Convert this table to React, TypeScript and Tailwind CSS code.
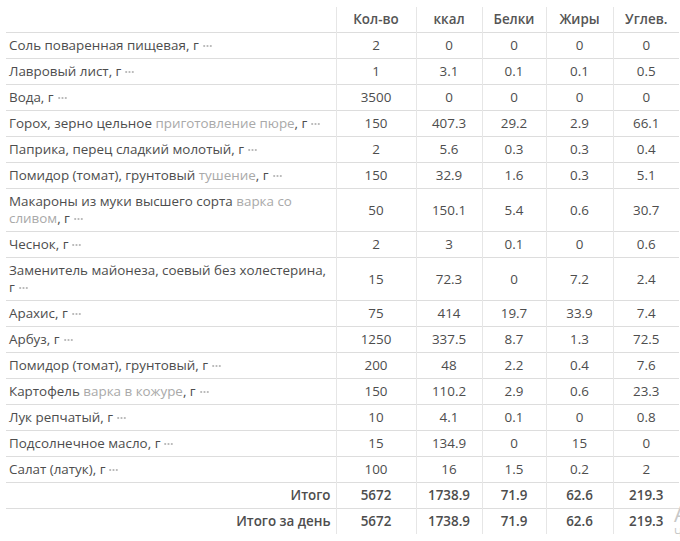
import React from "react";

type Row = {
  name: string;
  prep?: string;
  qty: string;
  kcal: string;
  protein: string;
  fat: string;
  carbs: string;
};

const ROWS: Row[] = [
  { name: "Соль поваренная пищевая", qty: "2", kcal: "0", protein: "0", fat: "0", carbs: "0" },
  { name: "Лавровый лист", qty: "1", kcal: "3.1", protein: "0.1", fat: "0.1", carbs: "0.5" },
  { name: "Вода", qty: "3500", kcal: "0", protein: "0", fat: "0", carbs: "0" },
  { name: "Горох, зерно цельное", prep: "приготовление пюре", qty: "150", kcal: "407.3", protein: "29.2", fat: "2.9", carbs: "66.1" },
  { name: "Паприка, перец сладкий молотый", qty: "2", kcal: "5.6", protein: "0.3", fat: "0.3", carbs: "0.4" },
  { name: "Помидор (томат), грунтовый", prep: "тушение", qty: "150", kcal: "32.9", protein: "1.6", fat: "0.3", carbs: "5.1" },
  { name: "Макароны из муки высшего сорта", prep: "варка со сливом", qty: "50", kcal: "150.1", protein: "5.4", fat: "0.6", carbs: "30.7" },
  { name: "Чеснок", qty: "2", kcal: "3", protein: "0.1", fat: "0", carbs: "0.6" },
  { name: "Заменитель майонеза, соевый без холестерина", qty: "15", kcal: "72.3", protein: "0", fat: "7.2", carbs: "2.4" },
  { name: "Арахис", qty: "75", kcal: "414", protein: "19.7", fat: "33.9", carbs: "7.4" },
  { name: "Арбуз", qty: "1250", kcal: "337.5", protein: "8.7", fat: "1.3", carbs: "72.5" },
  { name: "Помидор (томат), грунтовый", qty: "200", kcal: "48", protein: "2.2", fat: "0.4", carbs: "7.6" },
  { name: "Картофель", prep: "варка в кожуре", qty: "150", kcal: "110.2", protein: "2.9", fat: "0.6", carbs: "23.3" },
  { name: "Лук репчатый", qty: "10", kcal: "4.1", protein: "0.1", fat: "0", carbs: "0.8" },
  { name: "Подсолнечное масло", qty: "15", kcal: "134.9", protein: "0", fat: "15", carbs: "0" },
  { name: "Салат (латук)", qty: "100", kcal: "16", protein: "1.5", fat: "0.2", carbs: "2" },
];

const TOTALS = [
  { label: "Итого", values: ["5672", "1738.9", "71.9", "62.6", "219.3"] },
  { label: "Итого за день", values: ["5672", "1738.9", "71.9", "62.6", "219.3"] },
];

function MoreDots() {
  return (
    <svg width="9" height="4" viewBox="0 0 9 4" className="inline-block ml-[4px] align-middle">
      <circle cx="1.2" cy="2" r="1.1" fill="#b5b5b5" />
      <circle cx="4.5" cy="2" r="1.1" fill="#b5b5b5" />
      <circle cx="7.8" cy="2" r="1.1" fill="#b5b5b5" />
    </svg>
  );
}

const num = "border-l border-[#e6e6e6] text-center px-1 py-[4px]";

export default function App() {
  return (
    <div
      className="relative w-[680px] h-[541px] overflow-hidden bg-white text-[13.4px] leading-[17px] text-[#4d4d4d]"
      style={{ fontFamily: '"Open Sans", "Noto Sans", sans-serif' }}
    >
      <div className="pt-[7px] pl-[6px]">
        <table className="table-fixed border-collapse w-[673px]">
          <colgroup>
            <col className="w-[330px]" />
            <col className="w-[80px]" />
            <col className="w-[66px]" />
            <col className="w-[64px]" />
            <col className="w-[67px]" />
            <col className="w-[66px]" />
          </colgroup>
          <thead>
            <tr className="border-b border-[#dddddd] font-semibold text-[#555]">
              <th className="py-[4px]" />
              <th className={num + " font-semibold"}>Кол-во</th>
              <th className={num + " font-semibold"}>ккал</th>
              <th className={num + " font-semibold"}>Белки</th>
              <th className={num + " font-semibold"}>Жиры</th>
              <th className={num + " font-semibold"}>Углев.</th>
            </tr>
          </thead>
          <tbody>
            {ROWS.map((r, i) => (
              <tr key={i} className="border-b border-[#dddddd]">
                <td className="text-left pl-[3px] pr-[2px] py-[4px]">
                  {r.name}
                  {r.prep && <span className="text-[#a9a9a9]"> {r.prep}</span>}
                  , <span className="whitespace-nowrap">г<MoreDots /></span>
                </td>
                <td className={num}>{r.qty}</td>
                <td className={num}>{r.kcal}</td>
                <td className={num}>{r.protein}</td>
                <td className={num}>{r.fat}</td>
                <td className={num}>{r.carbs}</td>
              </tr>
            ))}
            {TOTALS.map((t, i) => (
              <tr
                key={t.label}
                className={i === 0 ? "border-b border-[#dddddd] font-semibold" : "font-semibold"}
              >
                <td className="text-right pr-[5px] py-[4px]">{t.label}</td>
                {t.values.map((v, j) => (
                  <td key={j} className={num}>
                    {v}
                  </td>
                ))}
              </tr>
            ))}
          </tbody>
        </table>
      </div>
      <div className="absolute left-[674px] top-[500px] text-[#c8c8c8] whitespace-nowrap">
        <div className="text-[22px] leading-[26px]">Активация Windows</div>
        <div className="text-[12px] leading-[14px]">Чтобы активировать Windows</div>
      </div>
    </div>
  );
}
